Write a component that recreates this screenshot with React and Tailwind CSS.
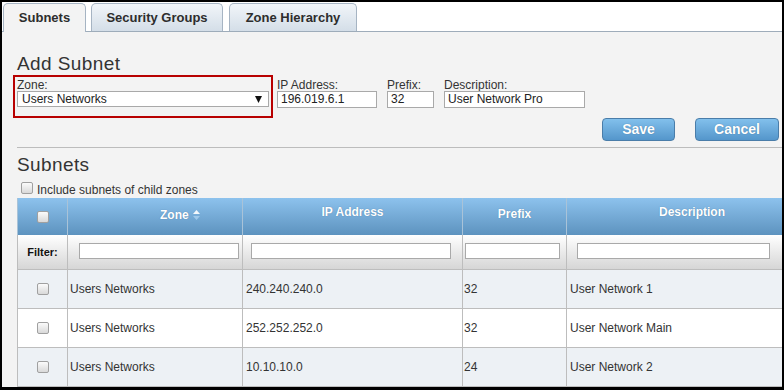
import React from 'react';

const rows = [
  { zone: 'Users Networks', ip: '240.240.240.0', prefix: '32', desc: 'User Network 1' },
  { zone: 'Users Networks', ip: '252.252.252.0', prefix: '32', desc: 'User Network Main' },
  { zone: 'Users Networks', ip: '10.10.10.0', prefix: '24', desc: 'User Network 2' },
];

const Check = () => (
  <div className="w-[12px] h-[12px] rounded-[2px] border border-[#a0a0a0] bg-gradient-to-b from-[#fbfbfb] to-[#d9d9d9]" />
);

const Field = ({ label, value, width }) => (
  <div className="flex flex-col">
    <span className="text-[12px] leading-[12px] text-[#333]">{label}</span>
    <div
      className="h-[17px] bg-white border border-[#a9a9a9] px-[3px] text-[12px] leading-[15px] text-[#222]"
      style={{ width }}
    >
      {value}
    </div>
  </div>
);

const App = () => {
  return (
    <div className="w-[784px] h-[390px] overflow-hidden border-t-2 border-l-2 border-r-2 border-b-[3px] border-black bg-[#f3f3f3] font-['Liberation_Sans',Arial,sans-serif]">
      {/* tabs */}
      <div className="h-[30px] bg-white border-b border-[#9eacba] flex items-end pl-[1px]">
        <div className="relative z-10 w-[83px] h-[29px] -mb-px bg-[#f3f3f3] border border-b-0 border-[#a6b4c3] rounded-t-[5px] flex justify-center pt-[6px] text-[13px] leading-[15px] font-bold text-[#2d2d2d]">
          Subnets
        </div>
        <div className="ml-[5px] w-[132px] h-[28px] bg-gradient-to-b from-[#f1f5f9] to-[#d4dee8] border border-b-0 border-[#a6b4c3] rounded-t-[5px] flex justify-center pt-[6px] text-[13px] leading-[15px] font-bold text-[#2d2d2d]">
          Security Groups
        </div>
        <div className="ml-[6px] w-[128px] h-[28px] bg-gradient-to-b from-[#f1f5f9] to-[#d4dee8] border border-b-0 border-[#a6b4c3] rounded-t-[5px] flex justify-center pt-[6px] text-[13px] leading-[15px] font-bold text-[#2d2d2d]">
          Zone Hierarchy
        </div>
      </div>

      <div className="pl-[15px]">
        <h2 className="pt-[21px] text-[19px] leading-[22px] text-[#333] tracking-[0.4px]">Add Subnet</h2>

        {/* form row */}
        <div className="flex items-start">
          <div className="-ml-[4px] w-[260px] h-[43px] border-2 border-[#b80000] px-[2px] pt-[2px]">
            <span className="block text-[12px] leading-[12px] text-[#333]">Zone:</span>
            <div className="h-[16px] bg-white border border-[#a9a9a9] flex items-center justify-between pl-[4px] pr-[6px] text-[12px] text-[#222]">
              <span>Users Networks</span>
              <svg width="7" height="7" viewBox="0 0 7 7">
                <polygon points="0,0 7,0 3.5,7" fill="#111" />
              </svg>
            </div>
          </div>
          <div className="ml-[4px] mt-[4px] flex gap-[10px]">
            <Field label="IP Address:" value="196.019.6.1" width={100} />
            <Field label="Prefix:" value="32" width={47} />
            <Field label="Description:" value="User Network Pro" width={141} />
          </div>
        </div>

        {/* buttons */}
        <div className="flex justify-end gap-[20px] pr-[3px]">
          <button className="w-[73px] h-[23px] rounded-[4px] border border-[#4a7da9] bg-gradient-to-b from-[#82c0ec] to-[#5496cb] text-white font-bold text-[14px] [text-shadow:0_0_1px_#3d6f98]">
            Save
          </button>
          <button className="w-[84px] h-[23px] rounded-[4px] border border-[#4a7da9] bg-gradient-to-b from-[#82c0ec] to-[#5496cb] text-white font-bold text-[14px] [text-shadow:0_0_1px_#3d6f98]">
            Cancel
          </button>
        </div>

        <div className="mt-[6px] h-px bg-[#bcbcbc]" />

        <h2 className="mt-[6px] text-[19px] leading-[22px] text-[#333] tracking-[0.4px]">Subnets</h2>

        <div className="mt-[6px] ml-[4px] flex items-start gap-[4px]">
          <Check />
          <span className="mt-[1px] text-[12px] leading-[14px] text-[#333]">Include subnets of child zones</span>
        </div>

        {/* table */}
        <div className="mt-[1px] w-[800px]">
          <div className="flex h-[37px] bg-gradient-to-b from-[#8dc2ed] to-[#5d93bf] text-white font-bold text-[12px] leading-[14px] [text-shadow:0_0_1px_#4a7aa3]">
            <div className="w-[50px] border-l border-[#a9c3d8] flex items-center justify-center pt-[1px]">
              <Check />
            </div>
            <div className="w-[175px] border-l border-[#a9c3d8] flex items-start pl-[92px] pt-[10px] gap-[4px]">
              <span>Zone</span>
              <svg width="7" height="10" viewBox="0 0 7 10" className="mt-[2px]">
                <polygon points="0,4 7,4 3.5,0" fill="#f4f8fc" />
                <polygon points="0,6 7,6 3.5,10" fill="#9ec8ea" />
              </svg>
            </div>
            <div className="w-[220px] border-l border-[#a9c3d8] flex justify-center pt-[7px]">IP Address</div>
            <div className="w-[104px] border-l border-[#a9c3d8] flex justify-center pt-[9px]">Prefix</div>
            <div className="w-[251px] border-l border-[#a9c3d8] flex justify-center pt-[7px]">Description</div>
          </div>

          <div className="flex h-[35px] border-b border-[#bdbdbd] bg-gradient-to-b from-white to-[#d6d6d6]">
            <div className="w-[50px] border-l border-[#bdbdbd] flex items-center justify-center text-[11px] font-bold text-[#111]">
              Filter:
            </div>
            <div className="w-[175px] border-l border-[#bdbdbd] pt-[8px] pl-[11px]">
              <div className="w-[160px] h-[16px] bg-white border border-[#a9a9a9]" />
            </div>
            <div className="w-[220px] border-l border-[#bdbdbd] pt-[8px] pl-[8px]">
              <div className="w-[200px] h-[16px] bg-white border border-[#a9a9a9]" />
            </div>
            <div className="w-[104px] border-l border-[#bdbdbd] pt-[8px] pl-[2px]">
              <div className="w-[95px] h-[16px] bg-white border border-[#a9a9a9]" />
            </div>
            <div className="w-[251px] border-l border-[#bdbdbd] pt-[8px] pl-[10px]">
              <div className="w-[193px] h-[16px] bg-white border border-[#a9a9a9]" />
            </div>
          </div>

          {rows.map((r, i) => (
            <div
              key={i}
              className={`flex h-[39px] border-b border-[#bdbdbd] text-[12px] text-[#333] ${i % 2 === 1 ? 'bg-white' : 'bg-[#edf1f5]'}`}
            >
              <div className="w-[50px] border-l border-[#bdbdbd] flex items-center justify-center">
                <Check />
              </div>
              <div className="w-[175px] border-l border-[#bdbdbd] flex items-center pl-[2px]">{r.zone}</div>
              <div className="w-[220px] border-l border-[#bdbdbd] flex items-center pl-[3px]">{r.ip}</div>
              <div className="w-[104px] border-l border-[#bdbdbd] flex items-center pl-[1px]">{r.prefix}</div>
              <div className="w-[251px] border-l border-[#bdbdbd] flex items-center pl-[3px]">{r.desc}</div>
            </div>
          ))}
        </div>
      </div>
    </div>
  );
};

export default App;
